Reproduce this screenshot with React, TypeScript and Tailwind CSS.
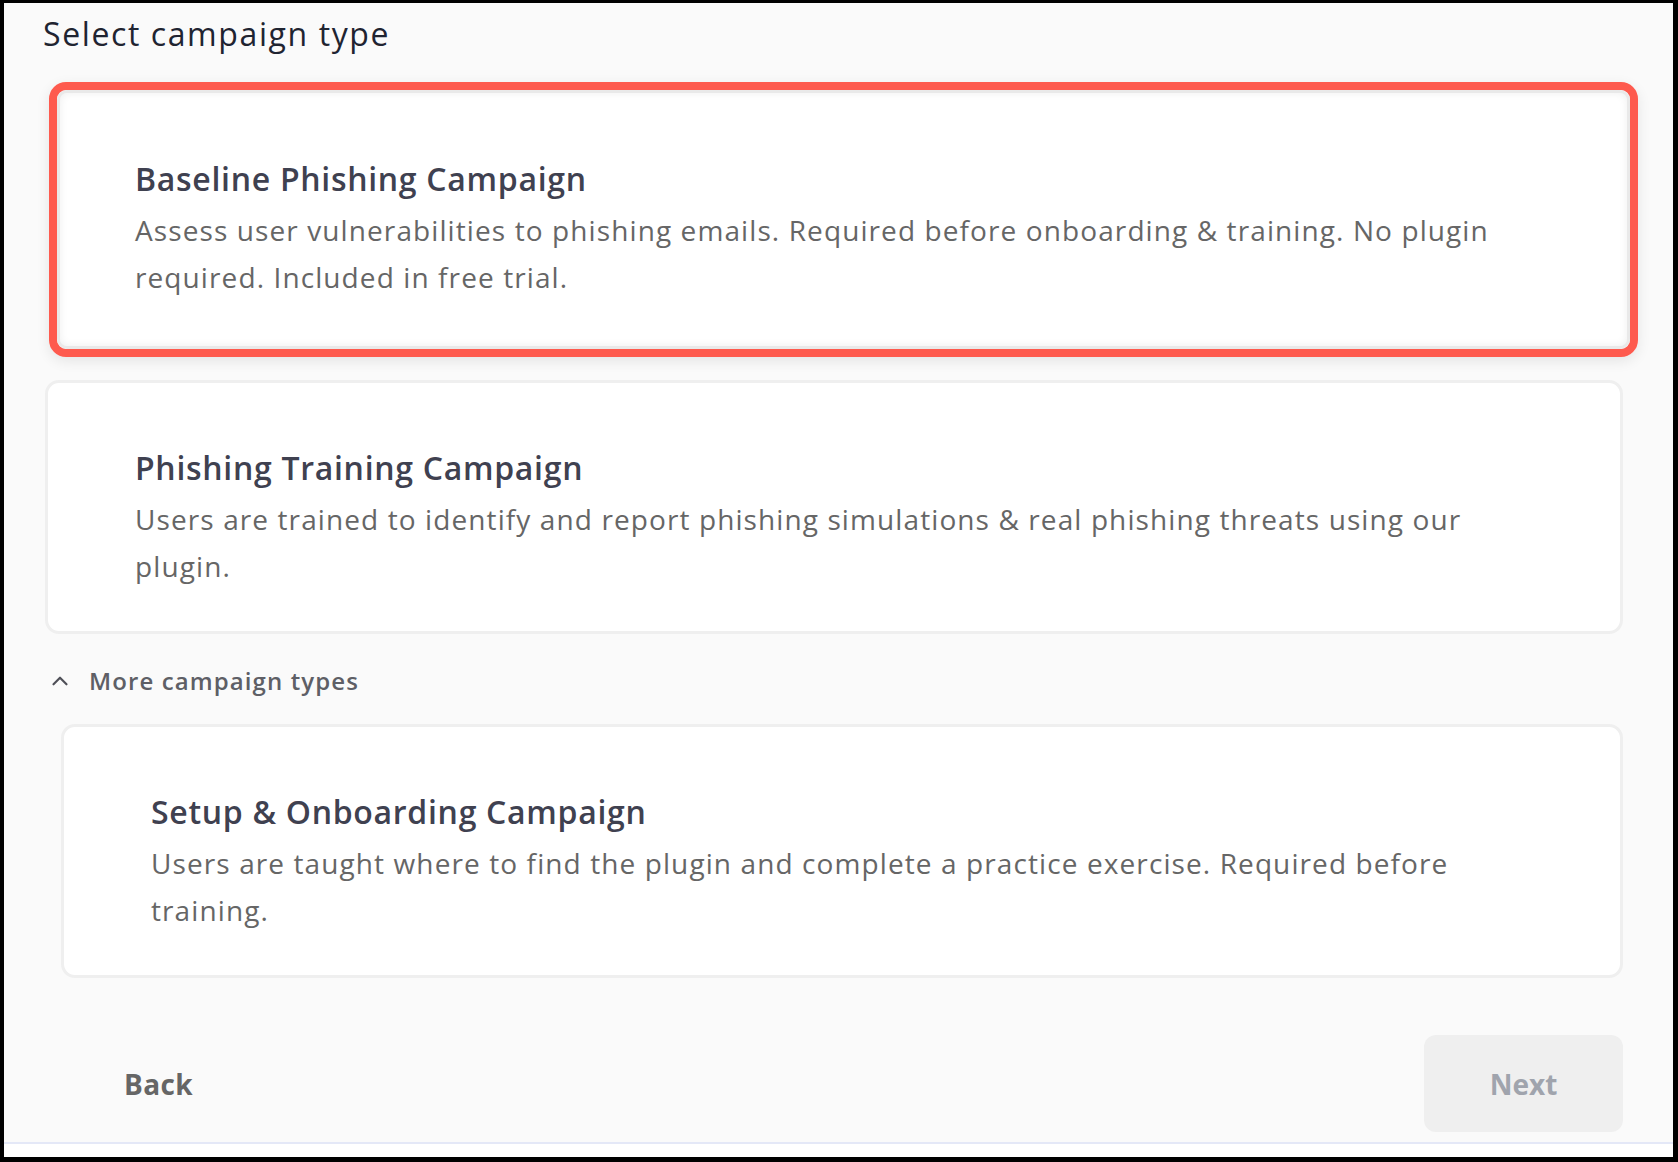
import { ChevronUp } from "lucide-react";

const font = { fontFamily: "'Open Sans', Lato, sans-serif" };

function CardBody({ title, text }: { title: string; text: string }) {
  return (
    <>
      <h3 className="text-[32px] leading-[44px] font-semibold tracking-[0.7px] text-[#3f4150] mb-[6px]">{title}</h3>
      <p className="text-[28px] leading-[47px] tracking-[1.1px] text-[#666666]">{text}</p>
    </>
  );
}

export default function App() {
  return (
    <div className="w-[1678px] h-[1162px] bg-black pt-[3px] pl-[4px] pr-[5px] pb-[5px]" style={font}>
      <div className="flex flex-col h-full bg-[#fafafa]">
        {/* Header */}
        <h1 className="pl-[39px] pt-[11px] text-[32px] leading-[40px] tracking-[1.6px] text-[#1f2431]">Select campaign type</h1>

        <div className="ml-[41px] w-[1578px] mt-[28px] flex flex-col">
          {/* Selected card */}
          <div className="ml-[4px] -mr-[15px] rounded-[17px] border-[8px] border-[#fe5a4e] shadow-[0_4px_14px_rgba(0,0,0,0.09)]">
            <div className="rounded-[10px] border-[3px] border-[#e9e9e9] bg-white shadow-[inset_0_0_8px_rgba(0,0,0,0.07)] pl-[75px] pr-[90px] pt-[64px] pb-[45px]">
              <CardBody
                title="Baseline Phishing Campaign"
                text="Assess user vulnerabilities to phishing emails. Required before onboarding & training. No plugin required. Included in free trial."
              />
            </div>
          </div>

          {/* Training card */}
          <div className="mt-[23px] rounded-[14px] border-[3px] border-[#efefef] bg-white pl-[87px] pr-[90px] pt-[63px] pb-[41px]">
            <CardBody
              title="Phishing Training Campaign"
              text="Users are trained to identify and report phishing simulations & real phishing threats using our plugin."
            />
          </div>

          {/* More types toggle */}
          <button className="mt-[32px] flex items-center gap-[16px] pl-[2px] text-left">
            <ChevronUp className="w-[26px] h-[26px] text-[#4f5058]" strokeWidth={2} />
            <span className="text-[24px] leading-[30px] font-semibold tracking-[1.1px] text-[#5e5f66]">More campaign types</span>
          </button>

          {/* Onboarding card */}
          <div className="mt-[28px] ml-[16px] rounded-[14px] border-[3px] border-[#efefef] bg-white pl-[87px] pr-[90px] pt-[63px] pb-[41px]">
            <CardBody
              title="Setup & Onboarding Campaign"
              text="Users are taught where to find the plugin and complete a practice exercise. Required before training."
            />
          </div>
        </div>

        {/* Footer buttons */}
        <div className="mt-auto mb-[10px] ml-[41px] w-[1578px] flex items-center justify-between">
          <button className="pl-[79px] text-[28px] font-bold tracking-[0.4px] text-[#666666]">Back</button>
          <button className="w-[199px] h-[97px] rounded-[12px] bg-[#efefef] text-[28px] font-bold text-[#a0a4ad]">Next</button>
        </div>
        <div className="h-[15px] border-t-2 border-[#e4e8f7] bg-white" />
      </div>
    </div>
  );
}
